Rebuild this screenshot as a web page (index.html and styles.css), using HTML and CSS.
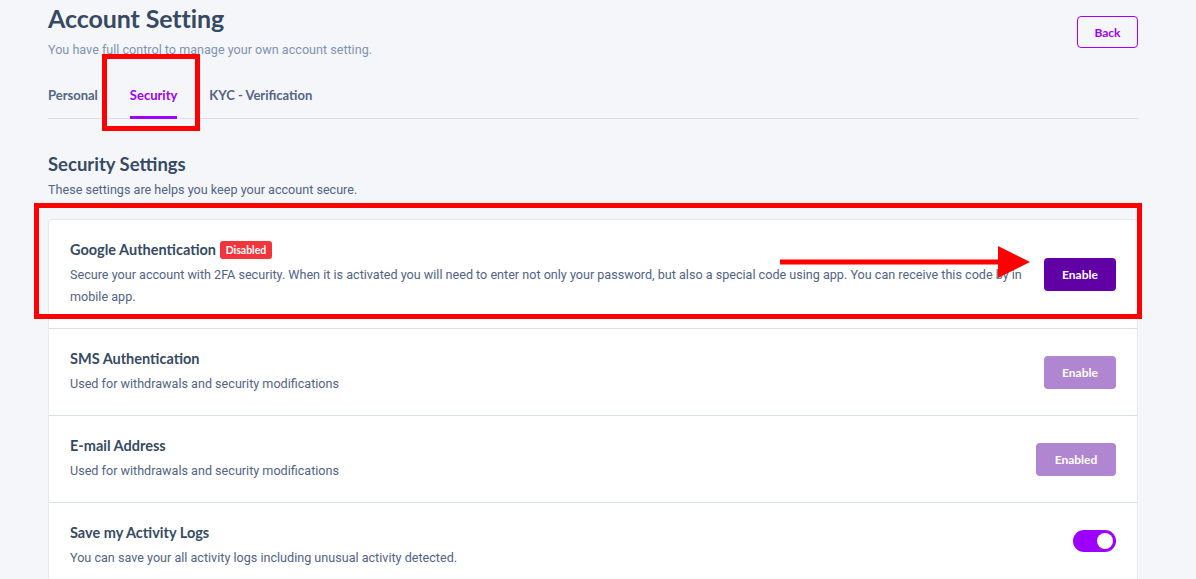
FILE: index.html
```html
<!DOCTYPE html>
<html lang="en">
<head>
<meta charset="utf-8">
<title>Account Setting</title>
<link rel="stylesheet" href="styles.css">
</head>
<body>
<div class="page">
  <div class="head">
    <div class="head-text">
      <h2 class="page-title">Account Setting</h2>
      <p class="page-sub">You have full control to manage your own account setting.</p>
    </div>
    <a class="btn-back" href="#">Back</a>
  </div>

  <nav class="tabs">
    <a class="tab" href="#">Personal</a>
    <a class="tab active" href="#">Security</a>
    <a class="tab" href="#">KYC - Verification</a>
  </nav>

  <h3 class="sec-title">Security Settings</h3>
  <p class="sec-sub">These settings are helps you keep your account secure.</p>

  <div class="card">
    <div class="row">
      <div class="row-text">
        <h6 class="row-title">Google Authentication <span class="badge">Disabled</span></h6>
        <p class="row-desc">Secure your account with 2FA security. When it is activated you will need to enter not only your password, but also a special code using app. You can receive this code by in mobile app.</p>
      </div>
      <a class="btn btn-dark" href="#">Enable</a>
    </div>
    <div class="row">
      <div class="row-text">
        <h6 class="row-title">SMS Authentication</h6>
        <p class="row-desc">Used for withdrawals and security modifications</p>
      </div>
      <a class="btn btn-light" href="#">Enable</a>
    </div>
    <div class="row">
      <div class="row-text">
        <h6 class="row-title">E-mail Address</h6>
        <p class="row-desc">Used for withdrawals and security modifications</p>
      </div>
      <a class="btn btn-light btn-wide" href="#">Enabled</a>
    </div>
    <div class="row">
      <div class="row-text">
        <h6 class="row-title">Save my Activity Logs</h6>
        <p class="row-desc">You can save your all activity logs including unusual activity detected.</p>
      </div>
      <span class="toggle"><span class="knob"></span></span>
    </div>
  </div>
</div>

<div class="mark mark-tab"></div>
<div class="mark mark-row"></div>
<svg class="arrow" width="260" height="40" viewBox="0 0 260 40">
  <rect x="0" y="13.5" width="222" height="5" fill="#ff0000"/>
  <polygon points="218,0 250,16 218,32" fill="#ff0000"/>
</svg>
</body>
</html>
```

FILE: styles.css
```css
* { box-sizing: border-box; }
body {
  margin: 0;
  background: #f5f6fa;
  font-family: Roboto, "Liberation Sans", sans-serif;
  color: #526484;
  position: relative;
  overflow: hidden;
}
.page {
  padding: 0 58px 0 48px;
}
.head {
  display: flex;
  justify-content: space-between;
  align-items: flex-start;
}
.page-title {
  font-family: Lato, "Noto Sans", sans-serif;
  font-weight: 700;
  font-size: 25px;
  line-height: 32px;
  color: #364a63;
  margin: 2px 0 0;
  letter-spacing: -0.1px;
}
.page-sub {
  font-size: 12.6px;
  line-height: 20px;
  color: #8094ae;
  margin: 6px 0 0;
}
.btn-back {
  margin-top: 16px;
  width: 61px;
  height: 32px;
  border: 1px solid #9d00ff;
  border-radius: 4px;
  color: #9d00ff;
  font-family: Lato, sans-serif;
  font-weight: 700;
  font-size: 12px;
  display: flex;
  align-items: center;
  justify-content: center;
  text-decoration: none;
}
.tabs {
  display: flex;
  gap: 32px;
  margin-top: 25px;
  border-bottom: 1px solid #dbdfea;
}
.tab {
  position: relative;
  font-family: Lato, sans-serif;
  font-weight: 700;
  font-size: 13px;
  line-height: 20px;
  padding-bottom: 13px;
  color: #526484;
  text-decoration: none;
}
.tab.active { color: #9d00ff; }
.tab.active::after {
  content: "";
  position: absolute;
  left: 0;
  right: 0;
  bottom: -1px;
  height: 3px;
  background: #9d00ff;
}
.sec-title {
  font-family: Lato, sans-serif;
  font-weight: 700;
  font-size: 18.5px;
  line-height: 24px;
  color: #364a63;
  margin: 33px 0 0;
}
.sec-sub {
  font-size: 12.6px;
  line-height: 20px;
  margin: 4px 0 0;
  color: #526484;
}
.card {
  margin-top: 19px;
  background: #fff;
  border: 1px solid #e5e9f2;
  border-radius: 3px;
}
.row {
  display: flex;
  align-items: center;
  gap: 20px;
  padding: 20px 21px;
  border-top: 1px solid #dbdfea;
}
.row:first-child { border-top: 0; }
.row-text { flex: 1; min-width: 0; }
.row-title {
  font-family: Lato, sans-serif;
  font-weight: 700;
  font-size: 14.5px;
  line-height: 20px;
  color: #364a63;
  margin: 0;
  display: flex;
  align-items: center;
  gap: 4px;
}
.badge {
  display: inline-flex;
  align-items: center;
  justify-content: center;
  width: 52px;
  height: 18px;
  background: #f2353c;
  color: #fff;
  border-radius: 3px;
  font-size: 10.5px;
  font-weight: 700;
}
.row-desc {
  font-size: 12.6px;
  line-height: 22px;
  margin: 4px 0 0;
  color: #526484;
}
.btn {
  flex: none;
  width: 72px;
  height: 33px;
  border-radius: 4px;
  color: #fff;
  font-family: Lato, sans-serif;
  font-weight: 700;
  font-size: 12px;
  display: flex;
  align-items: center;
  justify-content: center;
  text-decoration: none;
}
.btn-wide { width: 80px; }
.btn-dark { background: #6000a5; }
.btn-light { background: #b086d1; }
.toggle {
  flex: none;
  width: 43px;
  height: 22px;
  border-radius: 11px;
  background: #9d00ff;
  display: flex;
  align-items: center;
  justify-content: flex-end;
  padding-right: 3px;
  margin-bottom: 10px;
}
.knob {
  width: 16px;
  height: 16px;
  border-radius: 50%;
  background: #fff;
}
.mark {
  position: absolute;
  border: 5px solid #ff0000;
  pointer-events: none;
}
.mark-tab {
  left: 102px;
  top: 54px;
  width: 98px;
  height: 77px;
}
.mark-row {
  left: 34px;
  top: 203px;
  width: 1108px;
  height: 116px;
}
.arrow {
  position: absolute;
  left: 780px;
  top: 246px;
}
```
